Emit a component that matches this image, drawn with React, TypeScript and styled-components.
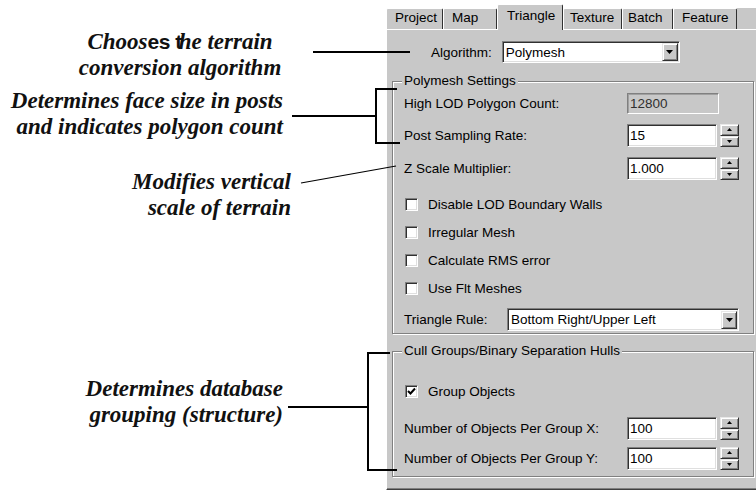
import React from "react";
import styled, { createGlobalStyle } from "styled-components";

const GRAY = "#c8c8c8";

const Global = createGlobalStyle`
  html, body { margin: 0; padding: 0; background: #fff; }
  body { font-family: "Liberation Sans", Arial, sans-serif; }
`;

const Page = styled.div`
  position: relative;
  width: 756px;
  height: 493px;
  display: flex;
  overflow: hidden;
  background: #fff;
`;

const Callouts = styled.div`
  width: 386px;
  flex: none;
  display: flex;
  flex-direction: column;
`;

const Callout = styled.div<{ $top: number; $align: "right" | "center"; $inset: number }>`
  margin-top: ${(p) => p.$top}px;
  padding-right: ${(p) => p.$inset}px;
  text-align: ${(p) => p.$align};
  font-family: "Liberation Serif", "Times New Roman", serif;
  font-style: italic;
  font-weight: bold;
  font-size: 23px;
  line-height: 26px;
  color: #111;
  white-space: nowrap;
`;

const Glitch = styled.span`
  font-family: "Liberation Sans", Arial, sans-serif;
  font-style: normal;
  font-weight: bold;
  font-size: 21px;
  letter-spacing: -0.5px;
  margin-right: -3px;
`;

const Panel = styled.div`
  width: 370px;
  flex: none;
  display: flex;
  flex-direction: column;
  font-family: "Liberation Sans", Arial, sans-serif;
  font-size: 13.5px;
  color: #000;
`;

const TabStrip = styled.div`
  height: 29px;
  display: flex;
  align-items: flex-end;
  position: relative;
  z-index: 1;
`;

const Tab = styled.div<{ $w: number; $pad: number; $active?: boolean }>`
  box-sizing: border-box;
  flex: none;
  width: ${(p) => p.$w}px;
  height: ${(p) => (p.$active ? 26 : 21)}px;
  margin-bottom: ${(p) => (p.$active ? -1 : 0)}px;
  background: ${GRAY};
  border-top: 1px solid #fff;
  border-left: 1px solid #fff;
  border-right: 1px solid #303030;
  border-radius: 2px 2px 0 0;
  padding: ${(p) => (p.$active ? 3 : 1)}px 0 0 ${(p) => p.$pad}px;
  line-height: 15px;
  white-space: nowrap;
`;

const TabFill = styled.div`
  flex: 1;
  height: 21px;
  background: ${GRAY};
`;

const Body = styled.div`
  box-sizing: border-box;
  height: 461px;
  background: ${GRAY};
  border-top: 1px solid #fff;
  border-left: 1px solid #fff;
  border-bottom: 1px solid #404040;
  box-shadow: inset 0 -1px #808080;
  display: flex;
  flex-direction: column;
  padding: 0 2px 0 5px;
`;

const AlgoRow = styled.div`
  display: flex;
  align-items: center;
  gap: 10px;
  height: 22px;
  margin-top: 11px;
  padding-left: 39px;
`;

const Group = styled.fieldset<{ $mt: number; $pt: number; $pb: number }>`
  margin: ${(p) => p.$mt}px 0 0 0;
  padding: ${(p) => p.$pt}px 14px ${(p) => p.$pb}px 11px;
  border: 1px solid #808080;
  box-shadow: inset 1px 1px #fff, 1px 1px #fff;
  min-width: 0;
  display: flex;
  flex-direction: column;
`;

const Legend = styled.legend`
  padding: 0 2px;
  margin-left: -2px;
  line-height: 16px;
  background: ${GRAY};
`;

const Row = styled.div<{ $mt?: number; $h: number }>`
  display: flex;
  align-items: center;
  justify-content: space-between;
  margin-top: ${(p) => p.$mt ?? 0}px;
  height: ${(p) => p.$h}px;
  white-space: nowrap;
`;

const CheckRow = styled.label<{ $mt?: number }>`
  display: flex;
  align-items: center;
  height: 28px;
  margin-top: ${(p) => p.$mt ?? 0}px;
  white-space: nowrap;
`;

const Slot = styled.div`
  width: 112px;
  height: 100%;
  display: flex;
  justify-content: space-between;
`;

const Field = styled.div<{ $w: number; $disabled?: boolean }>`
  box-sizing: border-box;
  width: ${(p) => p.$w}px;
  height: 100%;
  background: ${(p) => (p.$disabled ? GRAY : "#fff")};
  color: ${(p) => (p.$disabled ? "#303030" : "#000")};
  border: 1px solid;
  border-color: #808080 #fff #fff #808080;
  box-shadow: ${(p) =>
    p.$disabled ? "inset 1px 1px #a0a0a0" : "inset 1px 1px #303030, inset -1px -1px #dfdfdf"};
  padding: 0 2px;
  display: flex;
  align-items: center;
  justify-content: space-between;
`;

const Raised = styled.div`
  box-sizing: border-box;
  background: ${GRAY};
  border: 1px solid;
  border-color: #e8e8e8 #303030 #303030 #e8e8e8;
  box-shadow: inset 1px 1px #fff, inset -1px -1px #808080;
  display: flex;
  align-items: center;
  justify-content: center;
`;

const ComboButton = styled(Raised)`
  width: 16px;
  height: 18px;
  margin-right: -1px;
`;

const Spin = styled.div`
  width: 19px;
  height: 100%;
  display: flex;
  flex-direction: column;
`;

const SpinButton = styled(Raised)`
  flex: 1;
`;

const Box = styled.span`
  box-sizing: border-box;
  width: 13px;
  height: 13px;
  flex: none;
  background: #fff;
  border: 1px solid;
  border-color: #808080 #fff #fff #808080;
  box-shadow: inset 1px 1px #303030, inset -1px -1px #dfdfdf;
  margin: 0 10px 0 1px;
  display: flex;
  align-items: center;
  justify-content: center;
`;

const Overlay = styled.svg`
  position: absolute;
  left: 0;
  top: 0;
  pointer-events: none;
`;

const DownTri = ({ w = 7 }: { w?: number }) => (
  <svg width={w} height={Math.ceil(w / 2) + 0} viewBox={`0 0 ${w} ${Math.ceil(w / 2)}`}>
    <polygon points={`0,0 ${w},0 ${w / 2},${Math.ceil(w / 2)}`} fill="#000" />
  </svg>
);

const UpTri = () => (
  <svg width={5} height={3} viewBox="0 0 5 3">
    <polygon points="0,3 5,3 2.5,0" fill="#000" />
  </svg>
);

const Combo = ({ w, value }: { w: number; value: string }) => (
  <Field $w={w}>
    <span style={{ paddingLeft: 1 }}>{value}</span>
    <ComboButton>
      <DownTri />
    </ComboButton>
  </Field>
);

const Spinner = ({ value }: { value: string }) => (
  <Slot>
    <Field $w={90}>{value}</Field>
    <Spin>
      <SpinButton>
        <UpTri />
      </SpinButton>
      <SpinButton>
        <DownTri w={5} />
      </SpinButton>
    </Spin>
  </Slot>
);

const Check = ({ label, checked, mt }: { label: string; checked?: boolean; mt?: number }) => (
  <CheckRow $mt={mt}>
    <Box>
      {checked && (
        <svg width="9" height="9" viewBox="0 0 9 9">
          <polyline points="1,4 3.5,6.5 8,1.5" fill="none" stroke="#000" strokeWidth="2" />
        </svg>
      )}
    </Box>
    {label}
  </CheckRow>
);

const tabs = [
  { label: "Project", w: 57, pad: 8 },
  { label: "Map", w: 54, pad: 8 },
  { label: "Triangle", w: 66, pad: 9, active: true },
  { label: "Texture", w: 59, pad: 6 },
  { label: "Batch", w: 51, pad: 5 },
  { label: "Feature", w: 64, pad: 8 },
];

export default function App() {
  return (
    <Page>
      <Global />
      <Callouts>
        <Callout $top={29} $align="center" $inset={26}>
          Choos<Glitch>es t</Glitch>he terrain
          <br />
          conversion algorithm
        </Callout>
        <Callout $top={7} $align="right" $inset={103}>
          Determines face size in posts
          <br />
          and indicates polygon count
        </Callout>
        <Callout $top={29} $align="right" $inset={95}>
          Modifies vertical
          <br />
          scale of terrain
        </Callout>
        <Callout $top={155} $align="right" $inset={103}>
          Determines database
          <br />
          grouping (structure)
        </Callout>
      </Callouts>

      <Panel>
        <TabStrip>
          {tabs.map((t) => (
            <Tab key={t.label} $w={t.w} $pad={t.pad} $active={t.active}>
              {t.label}
            </Tab>
          ))}
          <TabFill />
        </TabStrip>
        <Body>
          <AlgoRow>
            <span>Algorithm:</span>
            <Combo w={178} value="Polymesh" />
          </AlgoRow>

          <Group $mt={10} $pt={4} $pb={2}>
            <Legend>Polymesh Settings</Legend>
            <Row $h={21}>
              <span>High LOD Polygon Count:</span>
              <Slot>
                <Field $w={92} $disabled>
                  12800
                </Field>
              </Slot>
            </Row>
            <Row $mt={10} $h={23}>
              <span>Post Sampling Rate:</span>
              <Spinner value="15" />
            </Row>
            <Row $mt={10} $h={23}>
              <span>Z Scale Multiplier:</span>
              <Spinner value="1.000" />
            </Row>
            <Check label="Disable LOD Boundary Walls" mt={10} />
            <Check label="Irregular Mesh" />
            <Check label="Calculate RMS error" />
            <Check label="Use Flt Meshes" />
            <Row $mt={6} $h={23}>
              <span>Triangle Rule:</span>
              <Combo w={232} value="Bottom Right/Upper Left" />
            </Row>
          </Group>

          <Group $mt={9} $pt={18} $pb={6}>
            <Legend>Cull Groups/Binary Separation Hulls</Legend>
            <Check label="Group Objects" checked />
            <Row $mt={12} $h={23}>
              <span>Number of Objects Per Group X:</span>
              <Spinner value="100" />
            </Row>
            <Row $mt={7} $h={23}>
              <span>Number of Objects Per Group Y:</span>
              <Spinner value="100" />
            </Row>
          </Group>
        </Body>
      </Panel>

      <Overlay width={756} height={493} viewBox="0 0 756 493">
        <g stroke="#000" strokeWidth={2} fill="none">
          <line x1={313} y1={52} x2={410} y2={52} />
          <line x1={292} y1={116} x2={376} y2={116} />
          <path d="M397,89 H376 V143 H400" />
          <line x1={288} y1={407} x2={368} y2={407} />
          <path d="M390,353 H368 V470 H397" />
        </g>
        <line x1={301} y1={183} x2={396} y2={166} stroke="#000" strokeWidth={1.2} />
      </Overlay>
    </Page>
  );
}
